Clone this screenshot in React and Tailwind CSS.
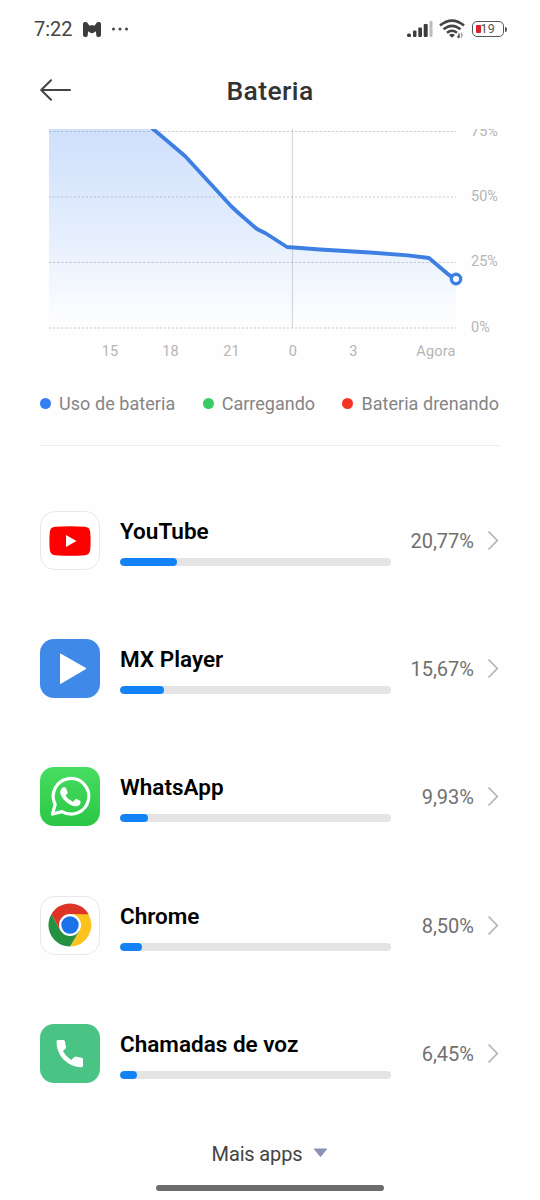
// App.jsx
const GRID_LINES = [131.5, 197, 262.5, 328];

const Y_LABELS = [
  { y: 136, text: "75%" },
  { y: 201, text: "50%" },
  { y: 266, text: "25%" },
  { y: 331.5, text: "0%" },
];

const X_LABELS = [
  { x: 110, text: "15" },
  { x: 170.5, text: "18" },
  { x: 231.5, text: "21" },
  { x: 293, text: "0" },
  { x: 353.5, text: "3" },
  { x: 436, text: "Agora" },
];

const LINE = "M140 118L152 128L185 156L231 206L239 213.5L257 229L266 233.5L287 247L320 249.5L370 252.5L408 255.3L429 258L449 275L456 279";

function YouTubeIcon() {
  return (
    <div className="w-[60px] h-[59px] rounded-[15px] bg-white border border-[#e8e8ea] flex items-center justify-center">
      <svg width="42" height="30" viewBox="0 0 42 30">
        <path d="M6 .8Q21-.4 36 .8Q40.500 1.200 41.200 6Q42 15 41.200 24Q40.500 28.800 36 29.200Q21 30.400 6 29.200Q1.500 28.800.8 24Q0 15 .8 6Q1.500 1.200 6 .8Z" fill="#f00" />
        <path d="M17 9L27.500 15L17 21Z" fill="#fff" />
      </svg>
    </div>
  );
}

function MxPlayerIcon() {
  return (
    <div className="w-[60px] h-[59px] rounded-[14px] bg-[#3f8ae9]">
      <svg width="60" height="59" viewBox="0 0 60 59">
        <path d="M20.500 15L46 29.500L20.500 44.500Z" fill="#fff" stroke="#fff" strokeWidth="1" strokeLinejoin="round" />
      </svg>
    </div>
  );
}

function WhatsAppIcon() {
  return (
    <div className="w-[60px] h-[59px] rounded-[14px] bg-linear-to-b from-[#46dd62] to-[#2bc744]">
      <svg width="60" height="59" viewBox="0 0 60 59">
        <path
          d="M12.500 47L15.200 37.400A17.800 17.800 0 1 1 22 44.600Z"
          fill="none"
          stroke="#fff"
          strokeWidth="3.200"
          strokeLinejoin="round"
        />
        <path
          d="M22.200 20.800Q23.200 20 24.800 20.200Q25.600 20.300 26 21.200L27.600 25Q27.900 25.800 27.300 26.500L26 28Q25.500 28.600 26 29.300Q28.500 33 32.500 34.600Q33.200 34.900 33.700 34.300L35.300 32.300Q35.800 31.700 36.600 32L40 33.700Q40.900 34.200 40.700 35.200Q40.300 38.200 37.500 39Q34.600 39.900 30.300 37.700Q24.800 35 21.600 29.500Q18.600 24.300 22.200 20.800Z"
          fill="#fff"
        />
      </svg>
    </div>
  );
}

function ChromeIcon() {
  return (
    <div className="w-[60px] h-[59px] rounded-[15px] bg-white border border-[#e8e8ea] flex items-center justify-center">
      <svg width="44" height="44" viewBox="0 0 48 48">
        <path d="M24 12H43.950A23.500 23.500 0 0 1 24 47.500L34.400 30Z" fill="#fcc31e" />
        <path d="M34.400 30L24 47.500A23.500 23.500 0 0 1 3.650 12.250L13.600 30Z" fill="#23913f" />
        <path d="M13.600 30L3.650 12.250A23.500 23.500 0 0 1 44.350 12.250L24 12Z" fill="#dc3527" />
        <circle cx="24" cy="24" r="12" fill="#fff" />
        <circle cx="24" cy="24" r="9.500" fill="#1a73e8" />
      </svg>
    </div>
  );
}

function PhoneIcon() {
  return (
    <div className="w-[60px] h-[59px] rounded-[14px] bg-[#4ac485]">
      <svg width="60" height="59" viewBox="0 0 60 59">
        <path
          d="M17.800 16H23.500Q24.800 16 25 17.500Q25.300 20.500 26 22.800Q26.300 23.800 25.500 24.600L22.900 27.300Q25.500 32.100 31.200 35.900L34.300 33Q35.100 32.300 36.200 32.600Q39 33.600 41.500 33.800Q43 34 43 35.300V41.500Q43 43.200 41.500 43.200Q31 43.200 23.600 35.600Q16.500 28.100 16.500 17.700Q16.500 16 17.800 16Z"
          fill="#fff"
        />
      </svg>
    </div>
  );
}

const APPS = [
  { name: "YouTube", percent: "20,77%", bar: 57, Icon: YouTubeIcon },
  { name: "MX Player", percent: "15,67%", bar: 43.5, Icon: MxPlayerIcon },
  { name: "WhatsApp", percent: "9,93%", bar: 28, Icon: WhatsAppIcon },
  { name: "Chrome", percent: "8,50%", bar: 22, Icon: ChromeIcon },
  { name: "Chamadas de voz", percent: "6,45%", bar: 16.5, Icon: PhoneIcon },
];

function StatusBar() {
  return (
    <div className="h-[58px] flex items-center justify-between pl-[34px] pr-[33px] text-[#444]">
      <div className="flex items-center">
        <span className="text-[20px] leading-none w-[49px]">7:22</span>
        <svg width="18" height="15" viewBox="0 0 18 15" fill="#3c3c3c">
          <rect x="0" y="0" width="4.800" height="15" rx="2" />
          <rect x="13.200" y="0" width="4.800" height="15" rx="2" />
          <path d="M4 1L6.800 3.800L9 3L11.200 3.800L14 1V12L12.300 9.200Q11 11.300 9 11.300Q7 11.300 5.700 9.200L4 12Z" />
        </svg>
        <svg className="ml-2.5" width="18" height="4" viewBox="0 0 18 4" fill="#444">
          <circle cx="2.500" cy="2" r="1.500" />
          <circle cx="9" cy="2" r="1.500" />
          <circle cx="15.500" cy="2" r="1.500" />
        </svg>
      </div>

      <div className="flex items-center">
        <svg width="26" height="18" viewBox="0 0 26 18" fill="#3c3c3c">
          <rect x="0" y="13.500" width="4" height="3.500" rx="1.500" />
          <rect x="6" y="10.500" width="3.500" height="6.500" rx="1" />
          <rect x="11.300" y="7.500" width="3.700" height="9.500" rx="1" />
          <rect x="16.700" y="4" width="4" height="13" rx="1" />
          <rect x="22.500" y="1" width="3" height="16" rx="1" fill="#bdbdbd" />
        </svg>
        <svg className="ml-1.5" width="26" height="20" viewBox="0 0 26 20" fill="none" stroke="#444" strokeWidth="2.600">
          <path d="M1 6.500Q13-3.200 25 6.500" />
          <path d="M4.500 10.300Q13 3.400 21.500 10.300" />
          <path d="M8 13.800Q13 9.700 18 13.800" />
          <path d="M10 16Q13 13.600 16 16L13 18.800Z" fill="#444" stroke="none" />
          <path d="M20 14.500V19M18.500 17L20 19" strokeWidth="1.300" />
          <path d="M22.500 19V14.500L24 16.500" stroke="#aaa" strokeWidth="1.200" />
        </svg>
        <div className="ml-[7px] flex items-center">
          <div className="w-[32px] h-4 rounded-[5px] border-[1.500px] border-[#555] flex items-center pl-[3px]">
            <span className="w-[5px] h-[8px] rounded-[1px] bg-[#d8232b]" />
            <span className="text-[12.500px] leading-none tracking-[0.3px] text-[#555]">19</span>
          </div>
          <span className="ml-px w-[2.500px] h-[5px] rounded-r-sm bg-[#555]" />
        </div>
      </div>
    </div>
  );
}

function Header() {
  return (
    <header className="h-[71px] grid grid-cols-[80px_1fr_80px] pt-[15px] px-[40px]">
      <svg className="mt-[6px]" width="32" height="22" viewBox="0 0 32 22" fill="none" stroke="#444" strokeWidth="2" strokeLinecap="round" strokeLinejoin="round">
        <path d="M30 11H1.500M11 1.200L1.200 11L11 20.800" />
      </svg>
      <h1 className="text-center text-[26.500px] leading-[36px] tracking-[0.4px] font-medium text-[#333]">Bateria</h1>
    </header>
  );
}

function BatteryChart() {
  return (
    <svg className="block shrink-0" width="540" height="241" viewBox="0 129 540 241">
      <defs>
        <linearGradient id="usage" gradientUnits="userSpaceOnUse" x1="0" y1="129" x2="0" y2="326">
          <stop offset="0" stopColor="#cee0fc" />
          <stop offset="0.500" stopColor="#e3edfd" />
          <stop offset="1" stopColor="#fefefe" />
        </linearGradient>
      </defs>
      <path d={`${LINE}V328H49V118Z`} fill="url(#usage)" />
      {GRID_LINES.map((y) => (
        <path key={y} d={`M49 ${y}H456`} stroke="#808590" strokeOpacity="0.420" strokeWidth="1.200" strokeDasharray="2.200 1.900" />
      ))}
      <path d="M292.500 129V328" stroke="#808590" strokeOpacity="0.300" strokeWidth="1.200" />
      <path d={LINE} fill="none" stroke="#3d7fe2" strokeWidth="3.800" strokeLinejoin="round" />
      <circle cx="456" cy="279" r="4.700" fill="#fff" stroke="#3d7fe2" strokeWidth="3.400" />
      <g fill="#b5b5b5" fontSize="14.500">
        {Y_LABELS.map(({ y, text }) => (
          <text key={text} x="471" y={y}>{text}</text>
        ))}
        {X_LABELS.map(({ x, text }) => (
          <text key={text} x={x} y="356" textAnchor="middle" letterSpacing="0.200">{text}</text>
        ))}
      </g>
    </svg>
  );
}

function Legend() {
  return (
    <div className="mx-[40px] h-[76px] pt-[23px] flex justify-between items-start border-b border-[#ececec] text-[18px] leading-[21px] text-[#858585]">
      <div className="flex items-center">
        <span className="w-[11px] h-[11px] rounded-full bg-[#347ef2] mr-2" />
        <span className="tracking-[0.06px]">Uso de bateria</span>
      </div>
      <div className="flex items-center">
        <span className="w-[11px] h-[11px] rounded-full bg-[#39cb66] mr-2" />
        Carregando
      </div>
      <div className="flex items-center pr-px">
        <span className="w-[11px] h-[11px] rounded-full bg-[#f43322] mr-2" />
        <span className="tracking-[0.04px]">Bateria drenando</span>
      </div>
    </div>
  );
}

function AppRow({ name, percent, bar, Icon }) {
  return (
    <li className="flex h-[60px]">
      <Icon />
      <div className="w-[270.5px] ml-[20px] pt-[6px]">
        <p className="text-[22.5px] leading-[29px] font-semibold text-black whitespace-nowrap">{name}</p>
        <div className="mt-[12px] h-2 rounded-full bg-[#e4e4e4] overflow-hidden">
          <div className="h-full rounded-full bg-[#1283f6]" style={{ width: bar }} />
        </div>
      </div>
      <span className="flex-1 text-right text-[20px] leading-[60px] text-[#707070]">{percent}</span>
      <svg className="ml-[13px] mr-px mt-[19px]" width="12" height="21" viewBox="0 0 12 21" fill="none" stroke="#b5b5b5" strokeWidth="1.700">
        <path d="M1.500 1.500L10.300 10.500L1.500 19.500" />
      </svg>
    </li>
  );
}

export default function App() {
  return (
    <div className="w-[540px] h-[1200px] overflow-hidden flex flex-col bg-[#fefefe] font-[Roboto,sans-serif]">
      <StatusBar />
      <Header />
      <BatteryChart />
      <Legend />

      <ul className="mt-[65px] px-[40px] flex flex-col gap-[68.2px]">
        {APPS.map((app) => (
          <AppRow key={app.name} {...app} />
        ))}
      </ul>

      <button className="mt-[56px] flex items-center justify-center gap-[11px] text-[20px] tracking-[-0.15px] leading-[28px] text-[#444]">
        Mais apps
        <svg className="mb-0.5" width="15" height="10" viewBox="0 0 15 10">
          <path d="M1.200 1H13.800L7.500 8.500Z" fill="#8b92b4" stroke="#8b92b4" strokeWidth="1" strokeLinejoin="round" />
        </svg>
      </button>
      <div className="mt-[17px] ml-[156px] w-[228px] h-[6px] rounded-full bg-[#6b6b6b]" />
    </div>
  );
}
